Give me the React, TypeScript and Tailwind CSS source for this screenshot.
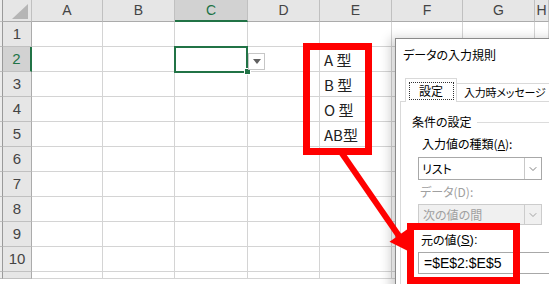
import React from 'react';
import { ChevronDown } from 'lucide-react';

const cols = ['A', 'B', 'C', 'D', 'E', 'F', 'G', 'H'];
const rows = [1, 2, 3, 4, 5, 6, 7, 8, 9, 10, 11];

const bloodTypes: Record<number, string> = {
  2: 'A 型',
  3: 'B 型',
  4: 'O 型',
  5: 'AB型',
};

const Sheet: React.FC = () => (
  <div className="grid h-[279px] grid-cols-[3px_29px_71px_72px_73px_72px_72px_71px_72px_1fr] grid-rows-[22px_repeat(10,25px)_7px] overflow-hidden font-['Liberation_Sans',sans-serif]">
    {/* header row */}
    <div className="border-r border-b border-r-[#9a9a9a] border-b-[#bdbdbd] bg-[#ececec]" />
    <div className="relative border-r border-b border-r-[#c0c0c0] border-b-[#ababab] bg-[#e6e6e6]">
      <svg className="absolute left-0 top-0" width="29" height="22">
        <polygon points="9,19 25,19 25,4" fill="#b5b5b5" />
      </svg>
    </div>
    {cols.map((c) =>
      c === 'C' ? (
        <div
          key={c}
          className="flex items-center justify-center border-r border-b-2 border-r-[#c0c0c0] border-b-[#217346] bg-[#d2d2d2] text-[14px] text-[#217346]"
        >
          {c}
        </div>
      ) : (
        <div
          key={c}
          className="flex items-center justify-center border-r border-b border-r-[#c0c0c0] border-b-[#ababab] bg-[#e6e6e6] text-[14px] text-[#444]"
        >
          {c}
        </div>
      )
    )}

    {rows.map((r) => (
      <React.Fragment key={r}>
        <div className="border-r border-b border-r-[#9a9a9a] border-b-[#bdbdbd] bg-[#ececec]" />
        {r === 2 ? (
          <div className="flex items-center justify-center border-r-2 border-b border-r-[#217346] border-b-[#c0c0c0] bg-[#d2d2d2] text-[15px] text-[#217346]">
            {r}
          </div>
        ) : (
          <div className="flex items-center justify-center border-r border-b border-r-[#ababab] border-b-[#c0c0c0] bg-[#e6e6e6] text-[15px] text-[#444]">
            {r < 11 ? r : null}
          </div>
        )}
        {cols.map((c) => (
          <div
            key={c}
            className="flex items-end border-r border-b border-[#d4d4d4] pb-[1px] pl-[4px] font-['Noto_Sans_CJK_JP',sans-serif] text-[15px] leading-[20px] text-[#222]"
          >
            {c === 'E' ? bloodTypes[r] : null}
          </div>
        ))}
      </React.Fragment>
    ))}
  </div>
);

const Dialog: React.FC = () => (
  <div className="absolute left-[395px] top-[38px] h-[270px] w-[170px] border border-[#8a8a8a] bg-white font-['Noto_Sans_CJK_JP',sans-serif] text-[12px] text-black shadow-[-5px_0_10px_rgba(0,0,0,0.18)] [font-feature-settings:'palt']">
    <div className="flex h-[31px] items-center pl-[7px]">データの入力規則</div>
    <div className="pl-[4px]">
      <div className="flex h-[31px] items-end pl-[5px]">
        <div className="relative z-10 mb-[-1px] flex h-[24px] w-[52px] items-center justify-center border border-b-0 border-[#d9d9d9] bg-white">
          <div className="flex h-[18px] w-[45px] items-center justify-center border border-dotted border-[#333]">設定</div>
        </div>
        <div className="flex h-[18px] items-center whitespace-nowrap border border-l-0 border-b-0 border-[#d9d9d9] pl-[7px] pr-[6px] text-[11px] tracking-[-0.2px]">
          入力時メッセージ
        </div>
      </div>
      <div className="h-[200px] border-l border-t border-[#d9d9d9] pl-[11px] pt-[12px]">
        <div className="flex h-[16px] items-center">
          <span className="whitespace-nowrap">条件の設定</span>
          <div className="ml-[5px] h-px flex-1 bg-[#dcdcdc]" />
        </div>
        <div className="pl-[6px]">
          <div className="mt-[6px] flex h-[16px] items-center pl-[4px] whitespace-nowrap">
            入力値の種類(<span className="underline">A</span>):
          </div>
          <div className="mt-[5px] flex h-[23px] w-[124px] border border-[#a8a8a8] bg-white">
            <div className="flex flex-1 items-center pl-[3px]">リスト</div>
            <div className="flex w-[17px] items-center justify-center border-l border-[#c8c8c8]">
              <ChevronDown size={12} strokeWidth={1.5} color="#555" />
            </div>
          </div>
          <div className="mt-[4px] flex h-[16px] items-center pl-[2px] text-[#a0a0a0] whitespace-nowrap">
            データ(D):
          </div>
          <div className="mt-[4px] flex h-[21px] w-[124px] border border-[#cccccc] bg-[#f0f0f0] text-[#a0a0a0]">
            <div className="flex flex-1 items-center pl-[4px]">次の値の間</div>
            <div className="flex w-[17px] items-center justify-center border-l border-[#cccccc]">
              <ChevronDown size={12} strokeWidth={1.5} color="#888" />
            </div>
          </div>
          <div className="mt-[7px] flex h-[16px] items-center pl-[3px] whitespace-nowrap">
            元の値
            <span className="font-['Liberation_Sans',sans-serif] text-[13px]">
              (<span className="underline">S</span>):
            </span>
          </div>
          <div className="mt-[4px] flex h-[22px] w-[140px] items-center border border-[#a8a8a8] bg-white pl-[5px] font-['Liberation_Sans',sans-serif] text-[14px]">
            =$E$2:$E$5
          </div>
        </div>
      </div>
    </div>
  </div>
);

export default function App() {
  return (
    <div className="relative h-[284px] w-[549px] overflow-hidden bg-white">
      <Sheet />

      {/* selected cell C2 */}
      <div className="absolute left-[174px] top-[46px] h-[27px] w-[74px] border-2 border-[#217346]" />
      <div className="absolute left-[244px] top-[68px] h-[7px] w-[7px] border border-white bg-[#217346]" />

      {/* list dropdown button */}
      <div className="absolute left-[248px] top-[53px] flex h-[17px] w-[17px] items-center justify-center border border-[#c6c6c6] bg-white">
        <svg width="8" height="5">
          <polygon points="0,0 8,0 4,5" fill="#606060" />
        </svg>
      </div>

      <Dialog />

      {/* red annotations */}
      <div className="absolute left-[303px] top-[43px] h-[112px] w-[69px] border-[7px] border-[#ff0000]" />
      <div className="absolute left-[407px] top-[223px] h-[61px] w-[113px] border-[7px] border-[#ff0000]" />
      <svg className="pointer-events-none absolute left-0 top-0" width="549" height="284">
        <line x1="341" y1="152" x2="399" y2="236" stroke="#ff0000" strokeWidth="6" />
        <polygon points="410,252 389.5,241.7 407.7,229" fill="#ff0000" />
      </svg>
    </div>
  );
}
